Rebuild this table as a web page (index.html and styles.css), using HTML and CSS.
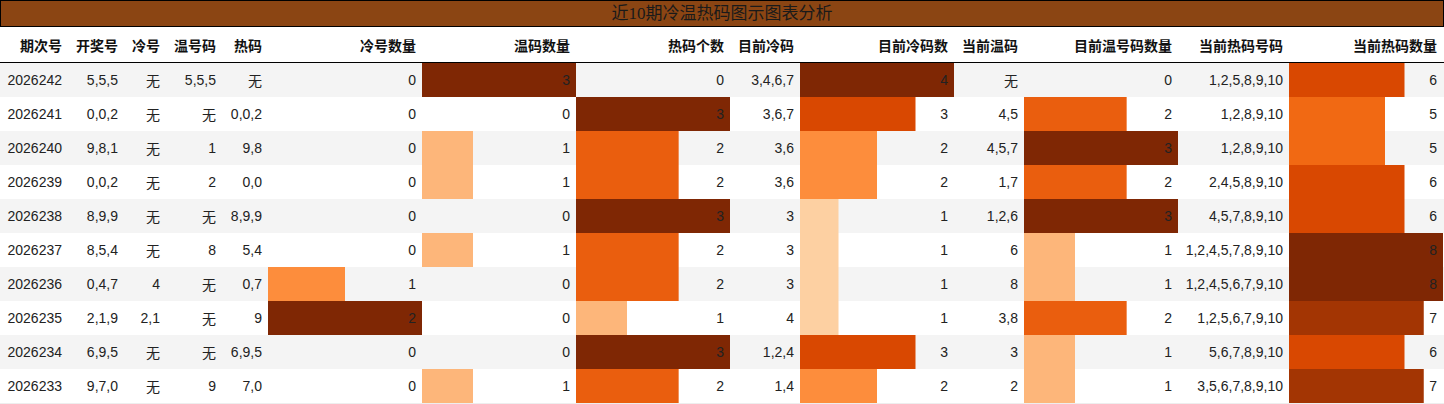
FILE: index.html
```html
<!DOCTYPE html>
<html lang="zh-CN">
<head>
<meta charset="utf-8">
<title>近10期冷温热码图示图表分析</title>
<link rel="stylesheet" href="styles.css">
</head>
<body>
<div class="chart">
  <div class="title">近10期冷温热码图示图表分析</div>
  <div class="grid">
    <div class="row head">
      <div class="cell">期次号</div><div class="cell">开奖号</div><div class="cell">冷号</div><div class="cell">温号码</div><div class="cell">热码</div><div class="cell">冷号数量</div><div class="cell">温码数量</div><div class="cell">热码个数</div><div class="cell">目前冷码</div><div class="cell">目前冷码数</div><div class="cell">当前温码</div><div class="cell">目前温号码数量</div><div class="cell">当前热码号码</div><div class="cell">当前热码数量</div>
    </div>

    <div class="row alt">
      <div class="cell">2026242</div><div class="cell">5,5,5</div><div class="cell">无</div><div class="cell">5,5,5</div><div class="cell">无</div>
      <div class="cell bar">0</div>
      <div class="cell bar" style="--w:100%;--c:#7f2704">3</div>
      <div class="cell bar">0</div>
      <div class="cell">3,4,6,7</div>
      <div class="cell bar" style="--w:100%;--c:#7f2704">4</div>
      <div class="cell">无</div>
      <div class="cell bar">0</div>
      <div class="cell">1,2,5,8,9,10</div>
      <div class="cell bar" style="--w:75%;--c:#d94801">6</div>
    </div>

    <div class="row">
      <div class="cell">2026241</div><div class="cell">0,0,2</div><div class="cell">无</div><div class="cell">无</div><div class="cell">0,0,2</div>
      <div class="cell bar">0</div>
      <div class="cell bar">0</div>
      <div class="cell bar" style="--w:100%;--c:#7f2704">3</div>
      <div class="cell">3,6,7</div>
      <div class="cell bar" style="--w:75%;--c:#d94801">3</div>
      <div class="cell">4,5</div>
      <div class="cell bar" style="--w:66.667%;--c:#ea5e0e">2</div>
      <div class="cell">1,2,8,9,10</div>
      <div class="cell bar" style="--w:62.5%;--c:#f16913">5</div>
    </div>

    <div class="row alt">
      <div class="cell">2026240</div><div class="cell">9,8,1</div><div class="cell">无</div><div class="cell">1</div><div class="cell">9,8</div>
      <div class="cell bar">0</div>
      <div class="cell bar" style="--w:33.333%;--c:#fdb67a">1</div>
      <div class="cell bar" style="--w:66.667%;--c:#ea5e0e">2</div>
      <div class="cell">3,6</div>
      <div class="cell bar" style="--w:50%;--c:#fd8d3c">2</div>
      <div class="cell">4,5,7</div>
      <div class="cell bar" style="--w:100%;--c:#7f2704">3</div>
      <div class="cell">1,2,8,9,10</div>
      <div class="cell bar" style="--w:62.5%;--c:#f16913">5</div>
    </div>

    <div class="row">
      <div class="cell">2026239</div><div class="cell">0,0,2</div><div class="cell">无</div><div class="cell">2</div><div class="cell">0,0</div>
      <div class="cell bar">0</div>
      <div class="cell bar" style="--w:33.333%;--c:#fdb67a">1</div>
      <div class="cell bar" style="--w:66.667%;--c:#ea5e0e">2</div>
      <div class="cell">3,6</div>
      <div class="cell bar" style="--w:50%;--c:#fd8d3c">2</div>
      <div class="cell">1,7</div>
      <div class="cell bar" style="--w:66.667%;--c:#ea5e0e">2</div>
      <div class="cell">2,4,5,8,9,10</div>
      <div class="cell bar" style="--w:75%;--c:#d94801">6</div>
    </div>

    <div class="row alt">
      <div class="cell">2026238</div><div class="cell">8,9,9</div><div class="cell">无</div><div class="cell">无</div><div class="cell">8,9,9</div>
      <div class="cell bar">0</div>
      <div class="cell bar">0</div>
      <div class="cell bar" style="--w:100%;--c:#7f2704">3</div>
      <div class="cell">3</div>
      <div class="cell bar" style="--w:25%;--c:#fdd0a2">1</div>
      <div class="cell">1,2,6</div>
      <div class="cell bar" style="--w:100%;--c:#7f2704">3</div>
      <div class="cell">4,5,7,8,9,10</div>
      <div class="cell bar" style="--w:75%;--c:#d94801">6</div>
    </div>

    <div class="row">
      <div class="cell">2026237</div><div class="cell">8,5,4</div><div class="cell">无</div><div class="cell">8</div><div class="cell">5,4</div>
      <div class="cell bar">0</div>
      <div class="cell bar" style="--w:33.333%;--c:#fdb67a">1</div>
      <div class="cell bar" style="--w:66.667%;--c:#ea5e0e">2</div>
      <div class="cell">3</div>
      <div class="cell bar" style="--w:25%;--c:#fdd0a2">1</div>
      <div class="cell">6</div>
      <div class="cell bar" style="--w:33.333%;--c:#fdb67a">1</div>
      <div class="cell">1,2,4,5,7,8,9,10</div>
      <div class="cell bar" style="--w:100%;--c:#7f2704">8</div>
    </div>

    <div class="row alt">
      <div class="cell">2026236</div><div class="cell">0,4,7</div><div class="cell">4</div><div class="cell">无</div><div class="cell">0,7</div>
      <div class="cell bar" style="--w:50%;--c:#fd8d3c">1</div>
      <div class="cell bar">0</div>
      <div class="cell bar" style="--w:66.667%;--c:#ea5e0e">2</div>
      <div class="cell">3</div>
      <div class="cell bar" style="--w:25%;--c:#fdd0a2">1</div>
      <div class="cell">8</div>
      <div class="cell bar" style="--w:33.333%;--c:#fdb67a">1</div>
      <div class="cell">1,2,4,5,6,7,9,10</div>
      <div class="cell bar" style="--w:100%;--c:#7f2704">8</div>
    </div>

    <div class="row">
      <div class="cell">2026235</div><div class="cell">2,1,9</div><div class="cell">2,1</div><div class="cell">无</div><div class="cell">9</div>
      <div class="cell bar" style="--w:100%;--c:#7f2704">2</div>
      <div class="cell bar">0</div>
      <div class="cell bar" style="--w:33.333%;--c:#fdb67a">1</div>
      <div class="cell">4</div>
      <div class="cell bar" style="--w:25%;--c:#fdd0a2">1</div>
      <div class="cell">3,8</div>
      <div class="cell bar" style="--w:66.667%;--c:#ea5e0e">2</div>
      <div class="cell">1,2,5,6,7,9,10</div>
      <div class="cell bar" style="--w:87.5%;--c:#a33503">7</div>
    </div>

    <div class="row alt">
      <div class="cell">2026234</div><div class="cell">6,9,5</div><div class="cell">无</div><div class="cell">无</div><div class="cell">6,9,5</div>
      <div class="cell bar">0</div>
      <div class="cell bar">0</div>
      <div class="cell bar" style="--w:100%;--c:#7f2704">3</div>
      <div class="cell">1,2,4</div>
      <div class="cell bar" style="--w:75%;--c:#d94801">3</div>
      <div class="cell">3</div>
      <div class="cell bar" style="--w:33.333%;--c:#fdb67a">1</div>
      <div class="cell">5,6,7,8,9,10</div>
      <div class="cell bar" style="--w:75%;--c:#d94801">6</div>
    </div>

    <div class="row">
      <div class="cell">2026233</div><div class="cell">9,7,0</div><div class="cell">无</div><div class="cell">9</div><div class="cell">7,0</div>
      <div class="cell bar">0</div>
      <div class="cell bar" style="--w:33.333%;--c:#fdb67a">1</div>
      <div class="cell bar" style="--w:66.667%;--c:#ea5e0e">2</div>
      <div class="cell">1,4</div>
      <div class="cell bar" style="--w:50%;--c:#fd8d3c">2</div>
      <div class="cell">2</div>
      <div class="cell bar" style="--w:33.333%;--c:#fdb67a">1</div>
      <div class="cell">3,5,6,7,8,9,10</div>
      <div class="cell bar" style="--w:87.5%;--c:#a33503">7</div>
    </div>
  </div>
</div>
</body>
</html>
```

FILE: styles.css
```css
html, body {
  margin: 0;
  padding: 0;
  background: #ffffff;
}

.chart {
  width: 1444px;
  font-family: "Liberation Sans", "Noto Sans CJK SC", sans-serif;
  font-size: 14px;
  color: #222222;
}

.title {
  box-sizing: border-box;
  height: 27px;
  line-height: 25px;
  border: 1px solid #000000;
  background: #8b4513;
  color: #1a1a1a;
  text-align: center;
  font-family: "Liberation Serif", "Noto Sans CJK SC", serif;
  font-size: 17px;
}

.grid {
  display: flex;
  flex-direction: column;
  border-bottom: 1px solid #eeeeee;
}

.row {
  display: grid;
  grid-template-columns: 68px 56px 42px 56px 46px 154px 154px 154px 70px 154px 70px 154px 111px 154px;
  height: 34px;
  background: #ffffff;
}

.row.alt {
  background: #f4f4f4;
}

.row.head {
  height: 35px;
  border-bottom: 1px solid #000000;
  font-weight: bold;
  color: #111111;
}

.cell {
  box-sizing: border-box;
  display: flex;
  align-items: center;
  justify-content: flex-end;
  padding: 0 6px;
  white-space: nowrap;
}

.cell.bar {
  background-image: linear-gradient(var(--c, transparent), var(--c, transparent));
  background-size: var(--w, 0%) 100%;
  background-repeat: no-repeat;
  background-position: left top;
}
```
